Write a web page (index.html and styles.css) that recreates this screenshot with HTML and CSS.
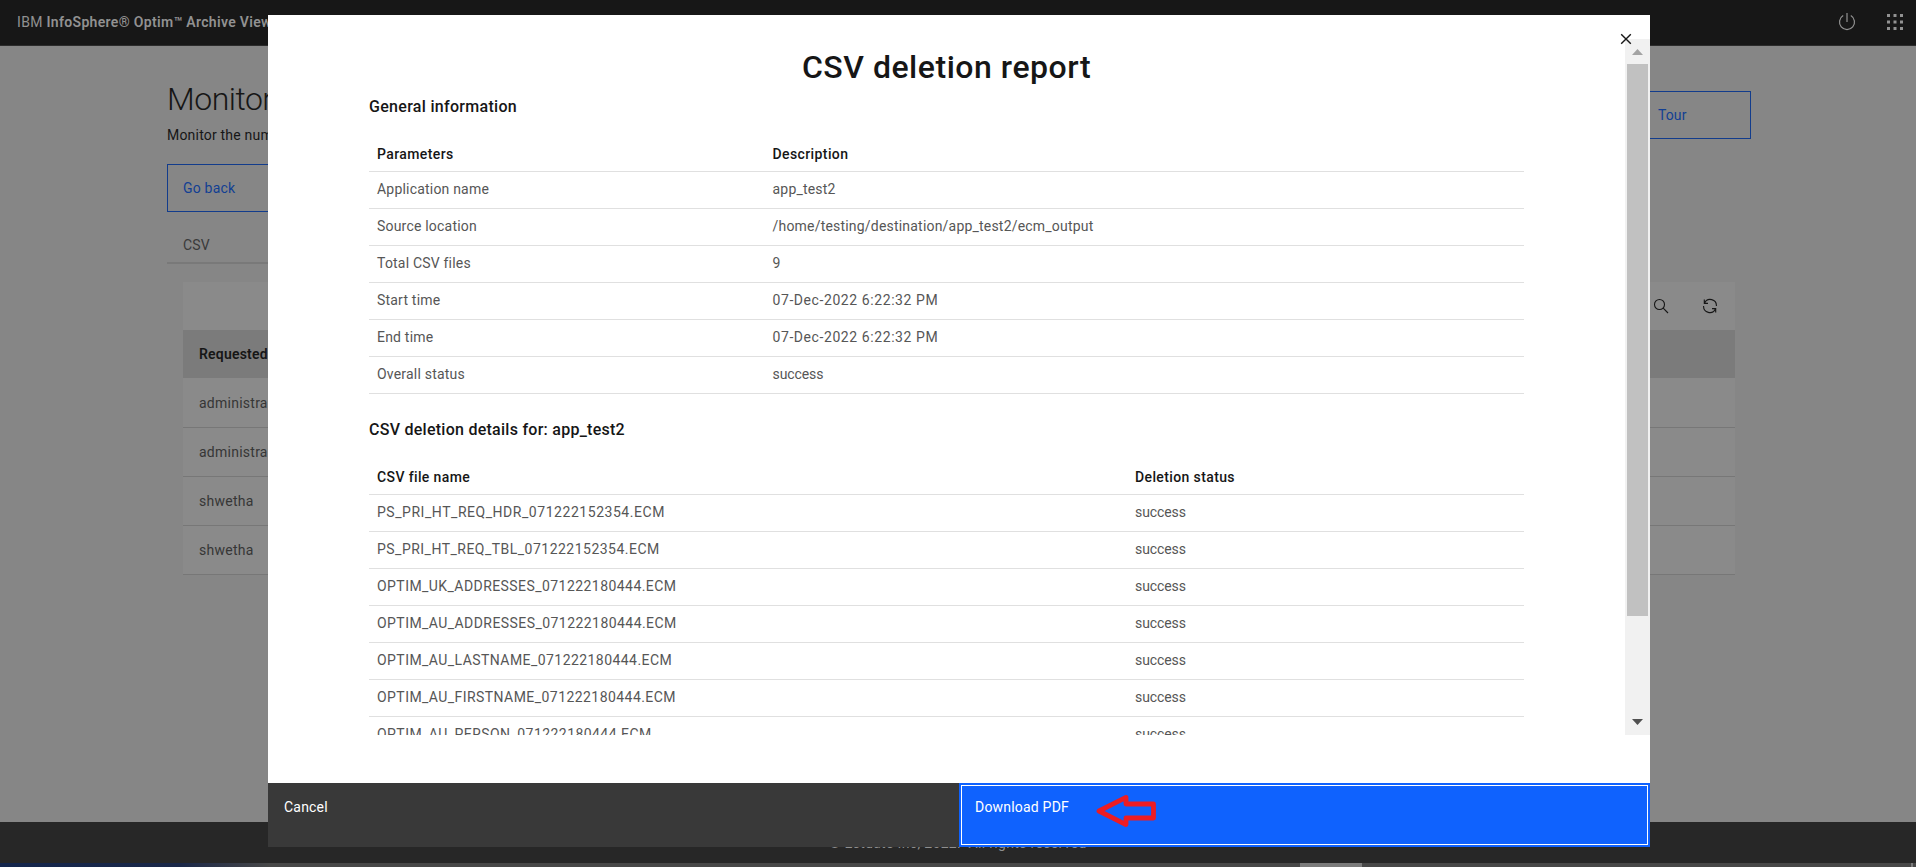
FILE: index.html
```html
<!DOCTYPE html>
<html lang="en">
<head>
<meta charset="utf-8">
<title>IBM InfoSphere Optim Archive Viewer</title>
<link rel="stylesheet" href="styles.css">
</head>
<body>
<div class="page">
  <header class="topbar">
    <div class="brand">IBM <b>InfoSphere® Optim™ Archive Viewer</b></div>
    <div class="topbar-actions">
      <svg width="20" height="20" viewBox="0 0 20 20" fill="none" stroke="#929292" stroke-width="1.2"><path d="M6.2 3.6a7.5 7.5 0 1 0 7.6 0M10 1v9"/></svg>
      <svg width="20" height="20" viewBox="0 0 20 20" fill="#929292"><path d="M2 2h3v3H2zM8.5 2h3v3h-3zM15 2h3v3h-3zM2 8.5h3v3H2zM8.5 8.5h3v3h-3zM15 8.5h3v3h-3zM2 15h3v3H2zM8.5 15h3v3h-3zM15 15h3v3h-3z"/></svg>
    </div>
  </header>
  <main class="main">
    <div class="heading">
      <div>
        <h1>Monitor</h1>
        <p>Monitor the num</p>
      </div>
      <div class="outline-btn tour">Tour</div>
    </div>
    <div class="outline-btn back">Go back</div>
    <div class="tab">CSV</div>
    <section class="panel">
      <div class="toolbar">
        <svg width="16" height="16" viewBox="0 0 16 16" fill="none" stroke="#161616" stroke-width="1.1"><circle cx="6.5" cy="6.5" r="5"/><path d="M10.2 10.2l4.8 4.8"/></svg>
        <svg width="16" height="16" viewBox="0 0 16 16" fill="none" stroke="#161616" stroke-width="1.1"><path d="M2.6 5A6.2 6.2 0 0 1 14.4 8M13.4 11A6.2 6.2 0 0 1 1.6 8M2.3 1.6V5.4H6M13.7 14.4V10.6H10"/></svg>
      </div>
      <div class="panel-head">Requested</div>
      <div class="panel-row">administra</div>
      <div class="panel-row">administra</div>
      <div class="panel-row">shwetha</div>
      <div class="panel-row">shwetha</div>
    </section>
  </main>
  <footer class="footer">© Estuate Inc, 2022.&nbsp; All rights reserved</footer>
  <div class="taskbar"><i class="task"></i><i class="edge"></i></div>
</div>

<div class="modal">
  <div class="modal-body">
    <div class="report">
      <h2>CSV deletion report</h2>
      <h3>General information</h3>
      <div class="table info">
        <div class="tr th"><span>Parameters</span><span>Description</span></div>
        <div class="tr"><span>Application name</span><span>app_test2</span></div>
        <div class="tr"><span>Source location</span><span>/home/testing/destination/app_test2/ecm_output</span></div>
        <div class="tr"><span>Total CSV files</span><span>9</span></div>
        <div class="tr"><span>Start time</span><span class="num">07-Dec-2022 6:22:32 PM</span></div>
        <div class="tr"><span>End time</span><span class="num">07-Dec-2022 6:22:32 PM</span></div>
        <div class="tr"><span>Overall status</span><span class="ok">success</span></div>
      </div>
      <h3 class="second">CSV deletion details for: app_test2</h3>
      <div class="table files">
        <div class="tr th"><span>CSV file name</span><span>Deletion status</span></div>
        <div class="tr"><span class="ps">PS_PRI_HT_REQ_HDR_071222152354.ECM</span><span class="ok">success</span></div>
        <div class="tr"><span class="tbl">PS_PRI_HT_REQ_TBL_071222152354.ECM</span><span class="ok">success</span></div>
        <div class="tr"><span>OPTIM_UK_ADDRESSES_071222180444.ECM</span><span class="ok">success</span></div>
        <div class="tr"><span>OPTIM_AU_ADDRESSES_071222180444.ECM</span><span class="ok">success</span></div>
        <div class="tr"><span>OPTIM_AU_LASTNAME_071222180444.ECM</span><span class="ok">success</span></div>
        <div class="tr"><span>OPTIM_AU_FIRSTNAME_071222180444.ECM</span><span class="ok">success</span></div>
        <div class="tr"><span>OPTIM_AU_PERSON_071222180444.ECM</span><span class="ok">success</span></div>
      </div>
    </div>
    <div class="scrollbar">
      <svg width="25" height="25" viewBox="0 0 25 25" fill="#a3a3a3"><path d="M7 16h11l-5.5-6z"/></svg>
      <div class="thumb"></div>
      <svg width="25" height="25" viewBox="0 0 25 25" fill="#505050"><path d="M7 9h11l-5.5 6z"/></svg>
    </div>
  </div>
  <div class="modal-footer">
    <div class="btn cancel">Cancel</div>
    <div class="btn download"><span>Download PDF</span></div>
  </div>
  <svg class="close" width="12" height="12" viewBox="0 0 12 12" fill="none" stroke="#161616" stroke-width="1.4"><path d="M1.2 1.2l9.6 9.6M10.8 1.2L1.2 10.8"/></svg>
  <svg class="pointer" width="62" height="36" viewBox="0 0 62 36" fill="none" stroke="#ed1c24" stroke-width="4.8" stroke-linejoin="round"><path d="M4 18L31 4.4V11H58.5V25H31V31.6Z"/></svg>
</div>
</body>
</html>
```
FILE: styles.css
```css
* { box-sizing: border-box; }
body {
  margin: 0;
  font: 14px/18px Roboto, "Noto Sans", sans-serif;
  letter-spacing: 0.2px;
  color: #161616;
  overflow: hidden;
}
h1, h2, h3, p { margin: 0; }
svg { display: block; }

.page { display: flex; flex-direction: column; height: 867px; background: #868686; }
.topbar {
  display: flex; justify-content: space-between; align-items: flex-start;
  height: 46px; padding: 12px 11px 0 17px;
  background: #171717; border-bottom: 1px solid #2c2c2c; color: #919191;
}
.brand { line-height: 20px; letter-spacing: 0.32px; }
.brand b { font-weight: 600; }
.topbar-actions { display: flex; gap: 28px; }

.main { flex: 1; padding: 32px 165px 0 167px; }
.heading { display: flex; justify-content: space-between; height: 86px; }
h1 { font-size: 32px; line-height: 42px; font-weight: 300; letter-spacing: -0.5px; }
.heading p { padding-top: 6px; line-height: 18px; letter-spacing: 0.2px; }
.outline-btn {
  height: 48px; padding: 0 15px; border: 1px solid #123c8c;
  color: #123f93; line-height: 46px;
}
.tour { width: 109px; margin-top: 13px; letter-spacing: 0.1px; }
.back { width: 196px; }
.tab {
  width: 160px; height: 52px; padding-left: 16px; line-height: 66px;
  border-bottom: 2px solid #797979; color: #3a3a3a;
}
.panel { margin: 18px 16px 0; background: #8a8a8a; }
.toolbar { display: flex; justify-content: flex-end; gap: 33px; height: 48px; padding: 16px 17px 0 0; }
.panel-head { height: 48px; padding-left: 16px; line-height: 49px; background: #7b7b7b; font-weight: 600; }
.panel-row { height: 49px; padding-left: 16px; line-height: 48px; border-bottom: 1px solid #777; color: #363636; letter-spacing: 0.25px; }
.panel-head + .panel-row { height: 50px; padding-top: 1px; }
.footer { height: 41px; padding-top: 12px; background: #272727; color: #8f8f8f; text-align: center; line-height: 18px; letter-spacing: 0.32px; }
.taskbar {
  display: flex; justify-content: flex-end; gap: 549px; height: 4px; padding-right: 3px;
  background: linear-gradient(90deg, #14264d 0, #1a2748 180px, #484848 270px, #484848);
}
.task { width: 62px; background: #7b7b7b; }
.edge { width: 2px; background: #7b7b7b; }

.modal {
  position: absolute; left: 268px; top: 15px; width: 1382px; height: 832px;
  display: flex; flex-direction: column; padding-top: 24px; background: #fff;
}
.modal-body { display: flex; height: 696px; overflow: hidden; }
.report { flex: 1; height: 696px; overflow: hidden; padding: 8px 101px 0; }
h2 { height: 48px; font-size: 32px; line-height: 40px; font-weight: 500; letter-spacing: 0.53px; text-align: center; }
h3 { height: 40px; font-size: 16px; line-height: 24px; font-weight: 500; letter-spacing: 0.3px; }
.second { margin-top: 24px; letter-spacing: 0.26px; }
.tr { display: grid; height: 37px; border-bottom: 1px solid #e0e0e0; line-height: 34px; color: #565656; }
.tr span { padding-left: 8px; white-space: nowrap; }
.info .tr { grid-template-columns: 395.5px 1fr; }
.files .tr { grid-template-columns: 758px 1fr; letter-spacing: 0.44px; }
.tr.th { padding-top: 2px; color: #161616; font-weight: 500; letter-spacing: 0.4px; }
.files .tr.th { letter-spacing: 0.38px; }
.tr .num { letter-spacing: 0.58px; }
.tr .ps { letter-spacing: 0.54px; }
.tr .tbl { letter-spacing: 0.48px; }
.tr .ok { letter-spacing: -0.1px; }

.scrollbar { width: 25px; display: flex; flex-direction: column; background: #f1f1f1; }
.thumb { height: 552px; margin: 0 2px 94px; background: #c1c1c1; }
.modal-footer { display: flex; height: 64px; margin-top: 48px; }
.btn { color: #fff; }
.cancel { width: 691px; padding: 15px 16px; background: #393939; }
.download { flex: 1; padding: 2px; background: #0f62fe; }
.download span { display: block; height: 60px; padding: 12px 13px; border: 1px solid #fff; }
.close { position: absolute; left: 1352px; top: 18px; }
.pointer { position: absolute; left: 827px; top: 778px; }
```
